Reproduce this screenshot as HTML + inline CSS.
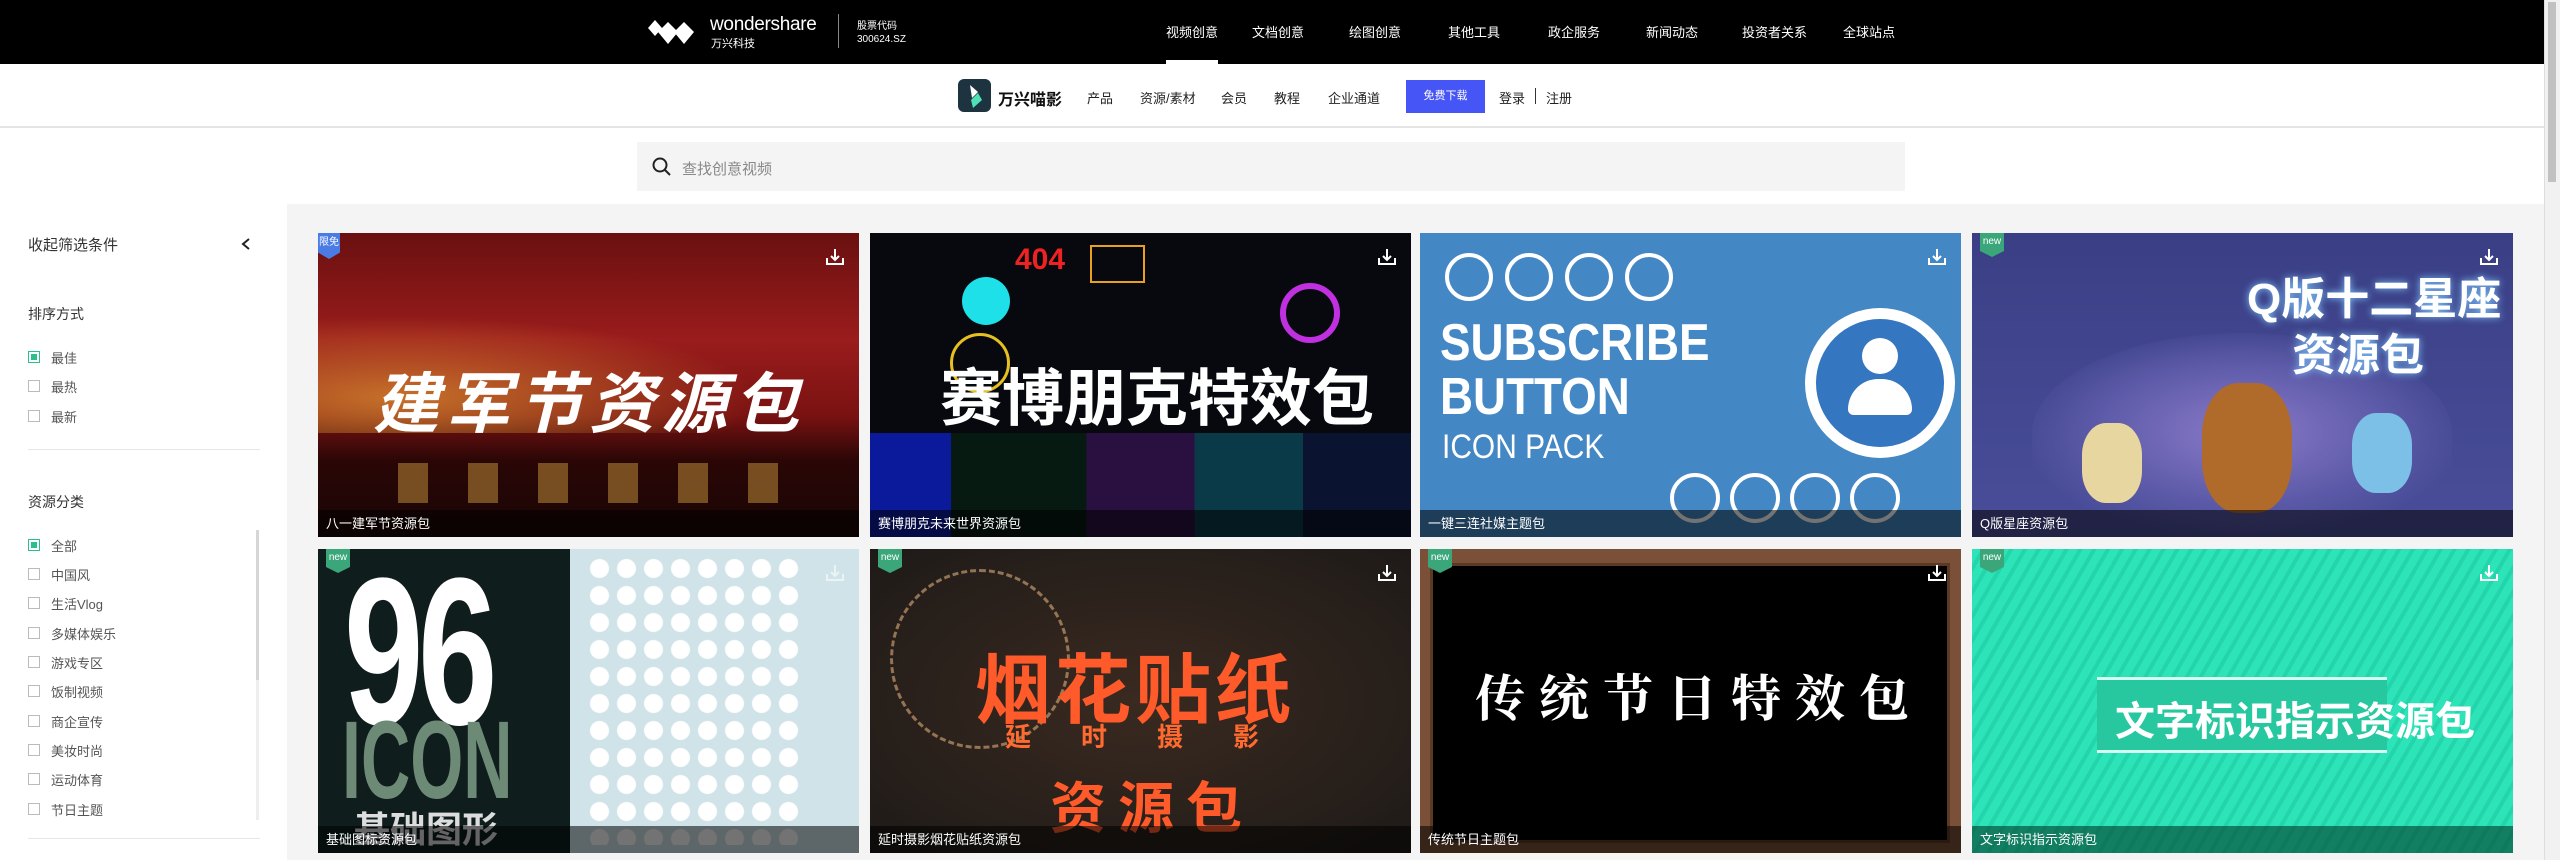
<!DOCTYPE html>
<html><head><meta charset="utf-8"><style>
*{margin:0;padding:0;box-sizing:border-box}
body{width:2560px;height:860px;overflow:hidden;background:#fff;font-family:"Liberation Sans","Noto Sans CJK SC",sans-serif;position:relative}
.a{position:absolute}
.top{left:0;top:0;width:2544px;height:64px;background:#000}
.nav{top:22px;color:#fff;font-size:13px}
.sub{left:0;top:64px;width:2544px;height:64px;background:#fff;border-bottom:2px solid #e4e4e4}
.sn{top:88px;font-size:13px;color:#222}
.side{font-size:13px;color:#555}
.cb{width:12px;height:12px;border:1px solid #bbb;background:#fff}
.cb.on{border-color:#2bbf8a}
.cb.on::after{content:"";position:absolute;left:2px;top:2px;width:6px;height:6px;background:#2bbf8a}
.card{width:541px;height:304px;overflow:hidden}
.cap{left:0;bottom:0;width:100%;height:27px;background:rgba(0,0,0,.55);color:#fff;font-size:13px;line-height:27px;padding-left:8px}
.new{left:8px;top:0;width:24px;height:24px;background:#3aa679;color:#fff;font-size:10px;text-align:center;line-height:18px;clip-path:polygon(0 0,100% 0,100% 75%,50% 100%,0 75%)}
.big{font-weight:bold;color:#fff;white-space:nowrap}
</style></head><body>
<svg width="0" height="0" style="position:absolute"><defs><g id="dl"><path d="M2 11 V17 H18 V11" stroke="#fff" stroke-width="2" fill="none"/><path d="M10 2 V13 M6 9 L10 13 L14 9" stroke="#fff" stroke-width="2" fill="none"/></g></defs></svg>
<div class="a top"></div>
<svg class="a" style="left:648px;top:20px" width="56" height="26" viewBox="0 0 56 26"><path d="M0 8 L7 0 L14 8 L7 16Z M10 12 L20 2 L30 12 L20 24Z M26 12 L36 2 L46 12 L36 24Z" fill="#fff"/></svg>
<div class="a" style="left:710px;top:14px;color:#fff;font-size:19px;letter-spacing:-.3px">wondershare</div>
<div class="a" style="left:711px;top:35px;color:#fff;font-size:11px">万兴科技</div>
<div class="a" style="left:838px;top:14px;width:1px;height:34px;background:#888"></div>
<div class="a" style="left:857px;top:17px;color:#fff;font-size:10px">股票代码</div>
<div class="a" style="left:857px;top:34px;color:#fff;font-size:10px">300624.SZ</div>
<div class="a nav" style="left:1166px">视频创意</div>
<div class="a" style="left:1166px;top:60px;width:52px;height:4px;background:#fff"></div>
<div class="a nav" style="left:1252px">文档创意</div>
<div class="a nav" style="left:1349px">绘图创意</div>
<div class="a nav" style="left:1448px">其他工具</div>
<div class="a nav" style="left:1548px">政企服务</div>
<div class="a nav" style="left:1646px">新闻动态</div>
<div class="a nav" style="left:1742px">投资者关系</div>
<div class="a nav" style="left:1843px">全球站点</div>
<div class="a" style="left:2544px;top:0;width:16px;height:860px;background:#f1f1f1;border-left:1px solid #ddd"></div>
<div class="a" style="left:2548px;top:2px;width:8px;height:180px;background:#c1c1c1"></div>

<div class="a sub"></div>
<div class="a" style="left:958px;top:79px;width:33px;height:33px;background:#1d3340;border-radius:6px"></div>
<svg class="a" style="left:962px;top:82px" width="26" height="28"><path d="M8 3 L16 10 L10 16 Z" fill="#fff"/><path d="M16 11 L20 18 L11 26 L9 18Z" fill="#4fe0b4"/></svg>
<div class="a" style="left:998px;top:86px;font-size:16px;font-weight:bold;color:#111">万兴喵影</div>
<div class="a sn" style="left:1087px">产品</div>
<div class="a sn" style="left:1140px">资源/素材</div>
<div class="a sn" style="left:1221px">会员</div>
<div class="a sn" style="left:1274px">教程</div>
<div class="a sn" style="left:1328px">企业通道</div>
<div class="a" style="left:1406px;top:80px;width:79px;height:33px;background:#4655f5;color:#fff;font-size:11px;text-align:center;line-height:33px">免费下载</div>
<div class="a sn" style="left:1499px">登录</div>
<div class="a" style="left:1535px;top:88px;width:1px;height:16px;background:#333"></div>
<div class="a sn" style="left:1546px">注册</div>

<div class="a" style="left:637px;top:142px;width:1268px;height:49px;background:#f4f4f4"></div>
<svg class="a" style="left:652px;top:157px" width="20" height="20"><circle cx="8" cy="8" r="6.5" stroke="#222" stroke-width="2" fill="none"/><path d="M13 13 L18 18" stroke="#222" stroke-width="2"/></svg>
<div class="a" style="left:682px;top:158px;font-size:15px;color:#888">查找创意视频</div>

<div class="a" style="left:287px;top:204px;width:2257px;height:656px;background:#f4f4f4"></div>
<div class="a" style="left:28px;top:234px;font-size:15px;color:#333">收起筛选条件</div>
<svg class="a" style="left:240px;top:237px" width="12" height="14"><path d="M9 2 L3 7 L9 12" stroke="#222" stroke-width="2" fill="none"/></svg>
<div class="a side" style="left:28px;top:304px;font-size:14px;color:#333">排序方式</div>
<div class="a cb on" style="left:28px;top:351px"></div><div class="a side" style="left:51px;top:348px">最佳</div>
<div class="a cb" style="left:28px;top:380px"></div><div class="a side" style="left:51px;top:377px">最热</div>
<div class="a cb" style="left:28px;top:410px"></div><div class="a side" style="left:51px;top:407px">最新</div>
<div class="a" style="left:28px;top:449px;width:232px;height:1px;background:#e6e6e6"></div>
<div class="a side" style="left:28px;top:492px;font-size:14px;color:#333">资源分类</div>
<div class="a cb on" style="left:28px;top:539px"></div><div class="a side" style="left:51px;top:536px">全部</div>
<div class="a cb" style="left:28px;top:568px"></div><div class="a side" style="left:51px;top:565px">中国风</div>
<div class="a cb" style="left:28px;top:597px"></div><div class="a side" style="left:51px;top:594px">生活Vlog</div>
<div class="a cb" style="left:28px;top:627px"></div><div class="a side" style="left:51px;top:624px">多媒体娱乐</div>
<div class="a cb" style="left:28px;top:656px"></div><div class="a side" style="left:51px;top:653px">游戏专区</div>
<div class="a cb" style="left:28px;top:685px"></div><div class="a side" style="left:51px;top:682px">饭制视频</div>
<div class="a cb" style="left:28px;top:715px"></div><div class="a side" style="left:51px;top:712px">商企宣传</div>
<div class="a cb" style="left:28px;top:744px"></div><div class="a side" style="left:51px;top:741px">美妆时尚</div>
<div class="a cb" style="left:28px;top:773px"></div><div class="a side" style="left:51px;top:770px">运动体育</div>
<div class="a cb" style="left:28px;top:803px"></div><div class="a side" style="left:51px;top:800px">节日主题</div>
<div class="a" style="left:256px;top:530px;width:3px;height:290px;background:#eee"></div>
<div class="a" style="left:256px;top:530px;width:3px;height:150px;background:#d6d6d6"></div>
<div class="a" style="left:28px;top:838px;width:232px;height:1px;background:#e6e6e6"></div>

<!-- row 1 -->
<div class="a card" style="left:318px;top:233px;background:linear-gradient(180deg,#6a1010 0%,#9a1c1c 35%,#7a1212 60%,#2a0606 75%,#1a0505 100%)">
 <div class="a" style="left:0;top:60px;width:541px;height:140px;background:radial-gradient(ellipse at 15% 75%,rgba(255,190,60,.55),transparent 55%)"></div>
 <div class="a" style="left:40px;top:230px;width:460px;height:40px;background:repeating-linear-gradient(90deg,transparent 0 40px,rgba(200,150,60,.5) 40px 70px)"></div>
 <div class="a big" style="left:55px;top:118px;font-size:66px;letter-spacing:6px;font-style:italic">建军节资源包</div>
 <div class="a" style="left:0;top:0;width:22px;height:26px;background:#4b7be5;color:#fff;font-size:10px;text-align:center;line-height:20px;clip-path:polygon(0 0,100% 0,100% 75%,50% 100%,0 75%)">限免</div>
 <svg class="a" style="right:14px;top:14px" width="20" height="20"><use href="#dl"/></svg><div class="a cap">八一建军节资源包</div></div>
<div class="a card" style="left:870px;top:233px;background:#07090e">
 <div class="a" style="left:0;top:200px;width:541px;height:104px;background:linear-gradient(90deg,#0a1a9a 0 15%,#061a12 15% 40%,#2a1040 40% 60%,#0a3a48 60% 80%,#0a1430 80%)"></div>
 <div class="a" style="left:80px;top:100px;width:60px;height:60px;border-radius:50%;border:3px solid #e6c020"></div>
 <div class="a big" style="left:70px;top:115px;font-size:62px">赛博朋克特效包</div>
 <div class="a" style="left:145px;top:10px;color:#e22;font-size:30px;font-weight:bold">404</div>
 <div class="a" style="left:220px;top:12px;width:55px;height:38px;border:2px solid #e8a020"></div>
 <div class="a" style="left:92px;top:44px;width:48px;height:48px;border-radius:50%;background:#1de0e8"></div>
 <div class="a" style="left:410px;top:50px;width:60px;height:60px;border-radius:50%;border:6px solid #c030e0"></div>
 <svg class="a" style="right:14px;top:14px" width="20" height="20"><use href="#dl"/></svg><div class="a cap">赛博朋克未来世界资源包</div></div>
<div class="a card" style="left:1420px;top:233px;background:#4487c5">
 <div class="a big" style="left:20px;top:80px;font-size:52px;transform:scaleX(.88);transform-origin:left">SUBSCRIBE</div>
 <div class="a big" style="left:20px;top:134px;font-size:52px;transform:scaleX(.88);transform-origin:left">BUTTON</div>
 <div class="a big" style="left:22px;top:195px;font-size:34px;font-weight:normal;transform:scaleX(.88);transform-origin:left">ICON PACK</div>
 <div class="a" style="left:385px;top:75px;width:150px;height:150px;border-radius:50%;background:#fff"></div>
 <div class="a" style="left:396px;top:86px;width:128px;height:128px;border-radius:50%;background:#3476c0"></div>
 <div class="a" style="left:442px;top:105px;width:36px;height:36px;border-radius:50%;background:#fff"></div>
 <div class="a" style="left:428px;top:146px;width:64px;height:36px;border-radius:32px 32px 6px 6px;background:#fff"></div>
 <div class="a" style="left:25px;top:20px;width:48px;height:48px;border-radius:50%;border:4px solid #fff"></div>
 <div class="a" style="left:85px;top:20px;width:48px;height:48px;border-radius:50%;border:4px solid #fff"></div>
 <div class="a" style="left:145px;top:20px;width:48px;height:48px;border-radius:50%;border:4px solid #fff"></div>
 <div class="a" style="left:205px;top:20px;width:48px;height:48px;border-radius:50%;border:4px solid #fff"></div>
 <div class="a" style="left:250px;top:240px;width:50px;height:50px;border-radius:50%;border:4px solid #fff"></div>
 <div class="a" style="left:310px;top:240px;width:50px;height:50px;border-radius:50%;border:4px solid #fff"></div>
 <div class="a" style="left:370px;top:240px;width:50px;height:50px;border-radius:50%;border:4px solid #fff"></div>
 <div class="a" style="left:430px;top:240px;width:50px;height:50px;border-radius:50%;border:4px solid #fff"></div>
 <svg class="a" style="right:14px;top:14px" width="20" height="20"><use href="#dl"/></svg><div class="a cap">一键三连社媒主题包</div></div>
<div class="a card" style="left:1972px;top:233px;background:linear-gradient(180deg,#3a3f85,#4a4e9a)">
 <div class="a" style="left:60px;top:100px;width:420px;height:200px;border-radius:50% 50% 0 0;background:radial-gradient(ellipse,#8a7ac8 0%,#5c5aa8 50%,transparent 75%)"></div>
 <div class="a" style="left:110px;top:190px;width:60px;height:80px;border-radius:40%;background:#e8d6a0"></div>
 <div class="a" style="left:380px;top:180px;width:60px;height:80px;border-radius:40%;background:#7cc0e8"></div>
 <div class="a" style="left:230px;top:150px;width:90px;height:130px;border-radius:40%;background:#b06a2a"></div>
 <div class="a big" style="left:275px;top:30px;font-size:44px;text-shadow:0 0 8px #7fc8ff">Q版十二星座</div>
 <div class="a big" style="left:320px;top:86px;font-size:44px;text-shadow:0 0 8px #7fc8ff">资源包</div>
 <div class="a new">new</div><svg class="a" style="right:14px;top:14px" width="20" height="20"><use href="#dl"/></svg><div class="a cap">Q版星座资源包</div></div>
<!-- row 2 -->
<div class="a card" style="left:318px;top:549px;background:#cfe3e8">
 <div class="a" style="left:0;top:0;width:252px;height:304px;background:#0f1e1d"></div>
 <div class="a big" style="left:26px;top:-18px;font-size:210px;letter-spacing:-8px;transform:scaleX(.68);transform-origin:left">96</div>
 <div class="a big" style="left:24px;top:148px;font-size:110px;color:#6d8a76;transform:scaleX(.62);transform-origin:left">ICON</div>
 <div class="a big" style="left:36px;top:252px;font-size:36px;color:#ddd">基础图形</div>
 <div class="a" style="left:268px;top:6px;width:220px;height:290px;background:radial-gradient(circle,#fff 9px,transparent 10px) 0 0/27px 27px"></div>
 <div class="a new">new</div><svg class="a" style="right:14px;top:14px;opacity:.6" width="20" height="20"><use href="#dl"/></svg><div class="a cap">基础图标资源包</div></div>
<div class="a card" style="left:870px;top:549px;background:radial-gradient(ellipse at 50% 50%,#3a2a20,#1e1a18)">
 <div class="a" style="left:20px;top:20px;width:180px;height:180px;border-radius:50%;border:3px dashed rgba(255,200,140,.5)"></div>
 <div class="a big" style="left:105px;top:80px;font-size:76px;color:#ff5a2a;letter-spacing:4px">烟花贴纸</div>
 <div class="a big" style="left:135px;top:168px;font-size:26px;color:#ff6a30;letter-spacing:50px">延时摄影</div>
 <div class="a big" style="left:180px;top:215px;font-size:56px;color:#ff5a2a;letter-spacing:12px">资源包</div>
 <div class="a new">new</div><svg class="a" style="right:14px;top:14px" width="20" height="20"><use href="#dl"/></svg><div class="a cap">延时摄影烟花贴纸资源包</div></div>
<div class="a card" style="left:1420px;top:549px;background:#7a5038">
 <div class="a" style="left:10px;top:14px;width:520px;height:280px;background:#000;border:3px solid #5a3a24"></div>
 <div class="a big" style="left:55px;top:110px;font-size:50px;letter-spacing:14px;font-family:'Liberation Serif','Noto Serif CJK SC',serif">传统节日特效包</div>
 <div class="a new">new</div><svg class="a" style="right:14px;top:14px" width="20" height="20"><use href="#dl"/></svg><div class="a cap">传统节日主题包</div></div>
<div class="a card" style="left:1972px;top:549px;background:repeating-linear-gradient(120deg,#2de3b8 0 8px,#24d5ac 8px 12px)">
 <div class="a" style="left:125px;top:128px;width:290px;height:76px;background:#27c79f;border-top:3px solid #d6fff2;border-bottom:3px solid #d6fff2"></div>
 <div class="a big" style="left:143px;top:140px;font-size:40px">文字标识指示资源包</div>
 <div class="a new">new</div><svg class="a" style="right:14px;top:14px" width="20" height="20"><use href="#dl"/></svg><div class="a cap" style="background:rgba(0,60,40,.6)">文字标识指示资源包</div></div>
</body></html>
